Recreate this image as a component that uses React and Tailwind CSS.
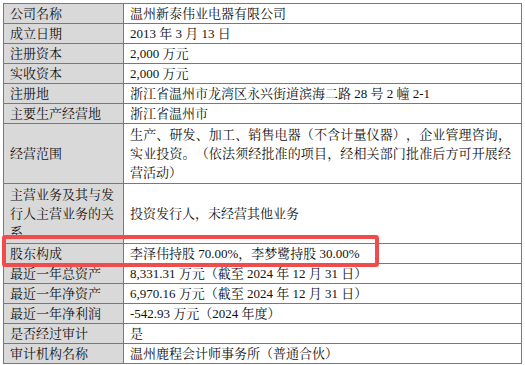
import React from 'react';

const rows = [
  { label: '公司名称', value: '温州新泰伟业电器有限公司' },
  { label: '成立日期', value: '2013 年 3 月 13 日' },
  { label: '注册资本', value: '2,000 万元' },
  { label: '实收资本', value: '2,000 万元' },
  { label: '注册地', value: '浙江省温州市龙湾区永兴街道滨海二路 28 号 2 幢 2-1' },
  { label: '主要生产经营地', value: '浙江省温州市' },
  {
    label: '经营范围',
    lines: [
      '生产、研发、加工、销售电器（不含计量仪器），企业管理咨询，',
      '实业投资。（依法须经批准的项目，经相关部门批准后方可开展经',
      '营活动）',
    ],
  },
  {
    label: '主营业务及其与发行人主营业务的关系',
    labelLines: ['主营业务及其与发', '行人主营业务的关', '系'],
    value: '投资发行人，未经营其他业务',
  },
  { label: '股东构成', value: '李泽伟持股 70.00%，李梦鹭持股 30.00%' },
  { label: '最近一年总资产', value: '8,331.31 万元（截至 2024 年 12 月 31 日）' },
  { label: '最近一年净资产', value: '6,970.16 万元（截至 2024 年 12 月 31 日）' },
  { label: '最近一年净利润', value: '-542.93 万元（2024 年度）' },
  { label: '是否经过审计', value: '是' },
  { label: '审计机构名称', value: '温州鹿程会计师事务所（普通合伙）' },
];

export default function App() {
  return (
    <div
      className="relative w-[525px] h-[365px] bg-white pl-[3px] pt-[3px] text-[13px] leading-[19px] text-[#111] [text-spacing-trim:space-all]"
      style={{ fontFamily: '"Liberation Serif", "Noto Serif CJK SC", "Noto Sans CJK SC", serif' }}
    >
      <table className="table-fixed w-[519px] border-collapse border border-[#4f81bd]">
        <colgroup>
          <col className="w-[120px]" />
          <col />
        </colgroup>
        <tbody>
          {rows.map((row) => {
            const multi = row.lines || row.labelLines;
            return (
              <tr key={row.label}>
                <td
                  className={`border border-[#4f81bd] bg-[#d9d9d9] px-[6px] align-middle ${
                    multi ? 'py-px' : 'py-0'
                  }`}
                >
                  {row.labelLines
                    ? row.labelLines.map((line) => (
                        <div key={line} className="whitespace-nowrap">
                          {line}
                        </div>
                      ))
                    : row.label}
                </td>
                <td className={`border border-[#4f81bd] px-[6px] align-middle ${multi ? 'py-px' : 'py-0'}`}>
                  {row.lines
                    ? row.lines.map((line, i) => (
                        <div
                          key={line}
                          className={`whitespace-nowrap ${
                            i < row.lines.length - 1 ? 'w-[381px] [text-align-last:justify]' : ''
                          }`}
                        >
                          {line}
                        </div>
                      ))
                    : row.value}
                </td>
              </tr>
            );
          })}
        </tbody>
      </table>
      <div className="absolute left-[2px] top-[235px] w-[377px] h-[32px] border-4 border-[#f04c4c] rounded-[3px]" />
    </div>
  );
}
